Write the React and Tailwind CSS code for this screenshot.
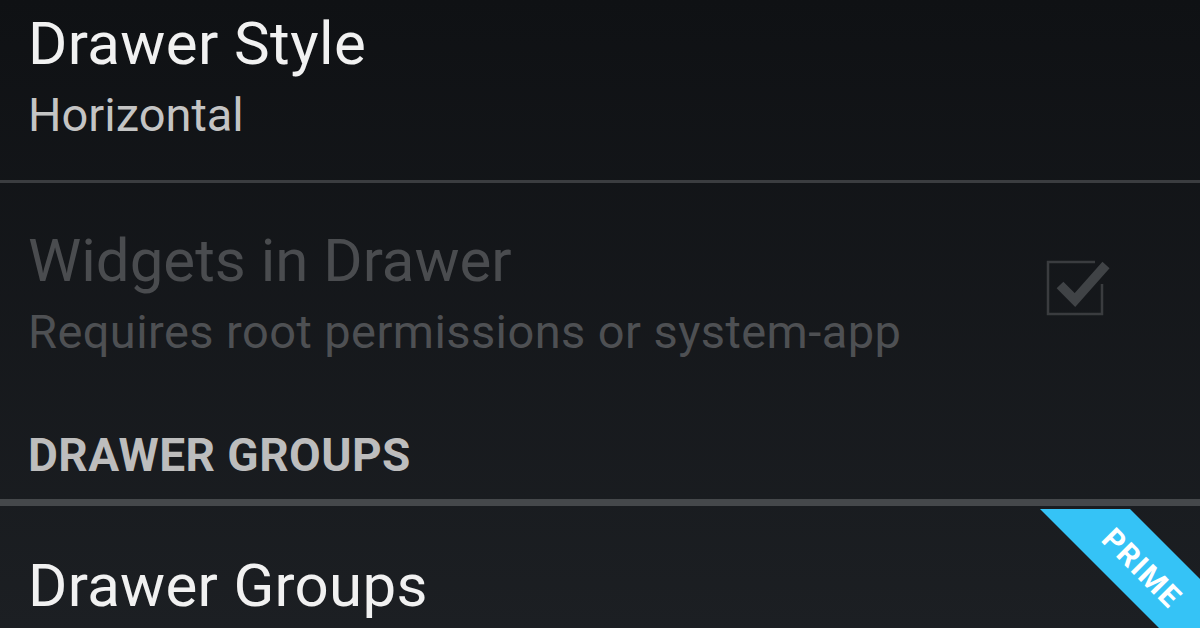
export default function App() {
  return (
    <div className="w-[1200px] h-[628px] overflow-hidden bg-linear-to-b from-[#0f1114] to-[#1c1f23] font-['Roboto',sans-serif]">
      {/* Row 1 */}
      <div className="h-[180px] pl-[28px] pt-[14px]">
        <div className="text-[60px] leading-[60px] tracking-[0.4px] text-[#f1f1f1]">Drawer Style</div>
        <div className="mt-[17px] text-[47px] leading-[47px] text-[#c4c4c4]">Horizontal</div>
      </div>
      <div className="h-[3px] bg-[#3b3d40]" />
      {/* Row 2 */}
      <div className="h-[172px] flex justify-between pl-[28px] pr-[86px]">
        <div className="pt-[48px]">
          <div className="text-[60px] leading-[60px] text-[#4a4c4f]">Widgets in Drawer</div>
          <div className="mt-[17px] text-[47px] leading-[47px] tracking-[0.42px] text-[#4e5053]">Requires root permissions or system-app</div>
        </div>
        <div className="pt-[73px]">
          <svg width="70" height="60" viewBox="0 0 70 60">
            <path d="M51 6 H4 V58 H58 V28" fill="none" stroke="#3a3c3f" strokeWidth="2.5" />
            <path d="M16 29 L31 44 L62 9" fill="none" stroke="#404346" strokeWidth="9.5" />
          </svg>
        </div>
      </div>
      {/* Section header */}
      <div className="h-[144px] pl-[28px] pt-[77px]">
        <div className="text-[46px] leading-[46px] font-bold tracking-[0.45px] text-[#bdbdbd]">DRAWER GROUPS</div>
      </div>
      <div className="h-[7px] bg-[#45484b]" />
      {/* Row 3 */}
      <div className="relative h-[122px] pl-[28px] pt-[50px]">
        <div className="text-[60px] leading-[60px] tracking-[0.3px] text-[#f1f1f1]">Drawer Groups</div>
        <svg className="absolute right-0 top-[3px]" width="160" height="160" viewBox="0 0 160 160">
          <polygon points="0,0 90,0 160,70 160,160" fill="#35c3f6" />
          <text
            x="102"
            y="59"
            transform="rotate(45 102 59)"
            textAnchor="middle"
            dominantBaseline="central"
            fill="#ffffff"
            fontFamily="Roboto, sans-serif"
            fontWeight="700"
            fontSize="30"
            letterSpacing="1.5"
          >
            PRIME
          </text>
        </svg>
      </div>
    </div>
  );
}
